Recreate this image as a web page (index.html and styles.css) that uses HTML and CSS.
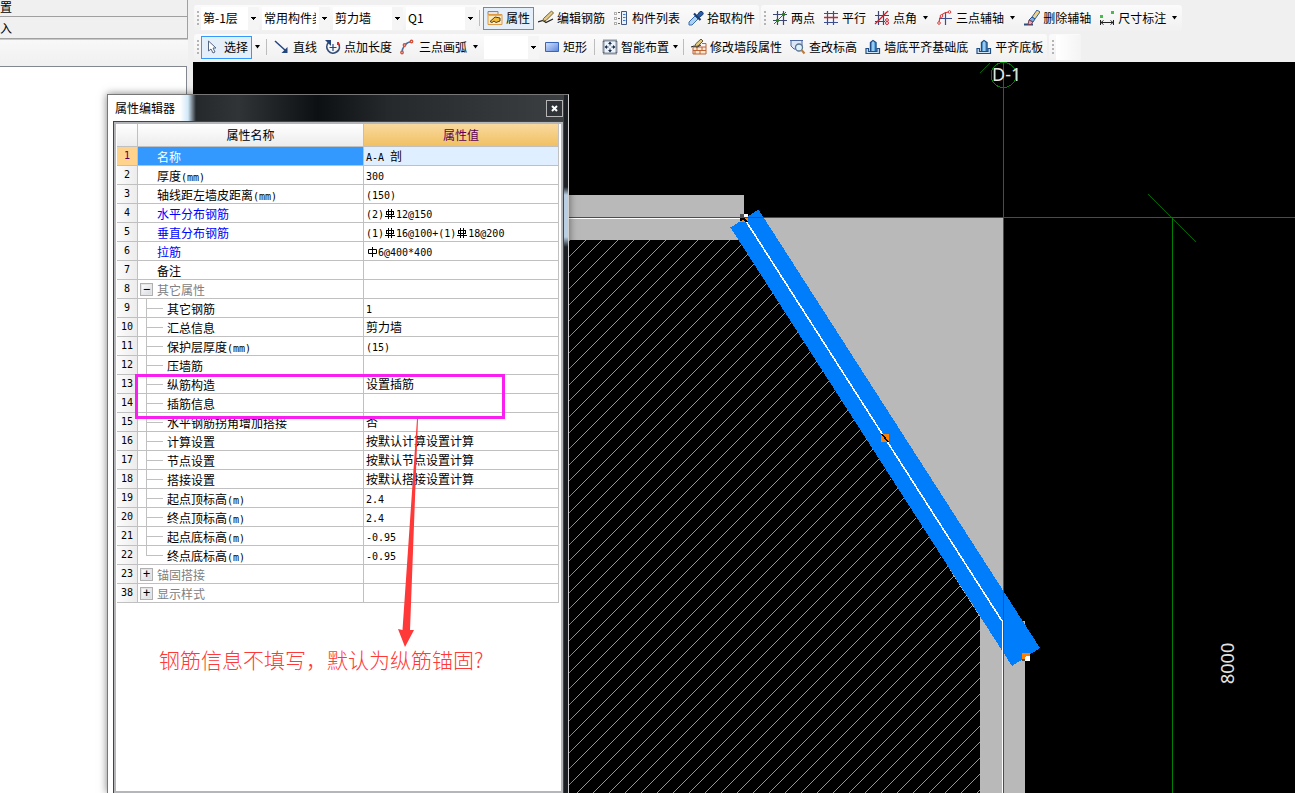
FILE: index.html
```html
<!DOCTYPE html>
<html lang="zh-CN">
<head>
<meta charset="utf-8">
<title>属性编辑器</title>
<link rel="stylesheet" href="styles.css">
</head>
<body>
<svg class="defs" aria-hidden="true">
  <defs>
    <linearGradient id="blueBox" x1="0" y1="0" x2="1" y2="1"><stop offset="0" stop-color="#d5e4ff"/><stop offset="1" stop-color="#5c86dc"/></linearGradient>
    <symbol id="caret" viewBox="0 0 7 4"><path d="M1 0h5L3.500 3.500z" fill="#000"/></symbol>
    <symbol id="base" viewBox="0 0 16 16"><path d="M5.500 12V3.500L8 1.500l3 2V12" fill="#5fa8e0" stroke="#1f4f86" stroke-width="1.400"/><path d="M8 2.500V13" stroke="#d3ecff"/><path d="M1 14.500V9.500h2.500v3h8.500v-3h2.500v5z" fill="#cfe5f7" stroke="#1f4f86" stroke-width="1.200"/></symbol>
    <symbol id="rebar" viewBox="0 0 12 12"><path d="M2 3.500h8M2 6.500h8M2.500 3.500v3M9.500 3.500v3M1 8.500h10M4.500 1v10M7.500 1v10" fill="none" stroke="#000"/></symbol>
    <symbol id="bar" viewBox="0 0 12 12"><path d="M2.500 3.500h8v4h-8zM6.500 1v10" fill="none" stroke="#000"/></symbol>
  </defs>
</svg>

<aside class="sidebar">
  <div class="side-row side-row-top">置</div>
  <div class="side-row">入</div>
  <div class="side-tools"></div>
  <div class="side-list"></div>
</aside>

<main class="main">
  <header class="toolbars">
    <div class="toolbar">
      <div class="strip">
        <i class="grip"></i>
        <div class="combos">
          <select class="combo combo-floor" aria-label="楼层"><option>第-1层</option></select>
          <select class="combo combo-kind" aria-label="构件类型"><option>常用构件类型</option></select>
          <select class="combo combo-item" aria-label="构件"><option>剪力墙</option></select>
          <select class="combo combo-item" aria-label="名称"><option>Q1</option></select>
        </div>
        <i class="sep"></i>
        <button class="tool active"><svg class="icon" viewBox="0 0 16 16"><path d="M1 1.500h10v3H1z" fill="#e5e5e5" stroke="#888"/><path d="M1 4.500h14v10H1z" fill="#ffe9bd" stroke="#dd9a42"/><path d="M1.500 5.500h13" stroke="#f0a850"/><path d="M3 11.500l5-4.500 5 1v3l-4 1.500-2-1.500-2 1.500z" fill="#f4bc3b" stroke="#4a4026"/></svg>属性</button>
        <button class="tool"><svg class="icon" viewBox="0 0 16 16"><path d="M0 12l5-1.500 3 2 7-3.500" fill="none" stroke="#222" stroke-width="1.300"/><path d="M13.500 1l2 2L8 10.500l-3 .5.500-2.500z" fill="#e2cb8c" stroke="#77602c"/></svg>编辑钢筋</button>
        <button class="tool"><svg class="icon" viewBox="0 0 16 16"><path d="M1.500 2.500h2v2h-2zM1.500 7.500h2v2h-2zM1.500 12.500h2v2h-2z" fill="#fff" stroke="#666" stroke-dasharray="1 1"/><path d="M5 2.500h2M5 8.500h2M5 13.500h2" stroke="#666"/><path d="M8.500 1.500h5v13h-5z" fill="#e8f0fb" stroke="#41597e"/><path d="M10 4.500h2.500M10 7.500h2.500M10 10.500h2.500" stroke="#3d79cf"/></svg>构件列表</button>
        <button class="tool"><svg class="icon" viewBox="0 0 16 16"><path d="M7 6l3 3-6 6H1v-3z" fill="#a9d2f2" stroke="#376cae"/><path d="M6 3.500L12.500 10" stroke="#173a70" stroke-width="2.200"/><path d="M9 5.500L11.500 2a2 2 0 0 1 3 3L11 7.500z" fill="#285fa8" stroke="#173a70"/></svg>拾取构件</button>
      </div>
      <div class="strip">
        <i class="grip"></i>
        <button class="tool"><svg class="icon" viewBox="0 0 16 16"><path d="M5.500 1v14M11.500 1v14M1 4.500h14M1 10.500h14" stroke="#3d4775" stroke-width="1.200"/><path d="M2 14L14 2" stroke="#c8202c"/><circle cx="5.500" cy="10.500" r="1.700" fill="#287d20"/><circle cx="11.500" cy="4.500" r="1.700" fill="#287d20"/></svg>两点</button>
        <button class="tool"><svg class="icon" viewBox="0 0 16 16"><path d="M4.500 1v14M10.500 1v14M1 3.500h14M1 12.500h14" stroke="#3d4d91" stroke-width="1.200"/><path d="M1 7.500h14" stroke="#bd2935" stroke-width="1.500"/></svg>平行</button>
        <button class="tool"><svg class="icon" viewBox="0 0 16 16"><path d="M4.500 1v14M9.500 1v14M1 5.500h14M1 11.500h10" stroke="#3d4775" stroke-width="1.200"/><path d="M1 14L14 1" stroke="#c8202c" stroke-width="1.300"/><circle cx="13" cy="10" r="1.400" fill="none" stroke="#cf2939"/><circle cx="13" cy="13" r="1.500" fill="none" stroke="#cf2939"/></svg>点角<svg class="caret"><use href="#caret"/></svg></button>
        <button class="tool"><svg class="icon" viewBox="0 0 16 16"><path d="M8.500 2v13M2 8.500h13" stroke="#3d4d91" stroke-width="1.200"/><path d="M2 14C2 6 6 2 13 2" fill="none" stroke="#d63d3d" stroke-width="1.200"/><g fill="#fff" stroke="#d63d3d"><circle cx="2" cy="13" r="1.300"/><circle cx="4.500" cy="6" r="1.300"/><circle cx="12.500" cy="2" r="1.300"/></g></svg>三点辅轴<svg class="caret"><use href="#caret"/></svg></button>
        <button class="tool"><svg class="icon" viewBox="0 0 16 16"><path d="M0 14.500h9" stroke="#2b4e79" stroke-width="2"/><path d="M13 0l3 2-5 7-3-2z" fill="#efd38b" stroke="#34639c"/><path d="M8 7l3 2-2 3-4-2z" fill="#7faee1" stroke="#285489"/><path d="M5 10l4 2-2 2.500H4z" fill="#eda3b9" stroke="#714255"/></svg>删除辅轴</button>
        <button class="tool"><svg class="icon" viewBox="0 0 16 16"><path d="M1.500 10v5M14.500 10v5M2 12.500h12M4.500 10.500L2 12.500l2.500 2M11.500 10.500l2.500 2-2.500 2" fill="none" stroke="#222"/><path d="M1 5h3v3H1zM12 1h3v3h-3z" fill="#49ba4c"/></svg>尺寸标注<svg class="caret"><use href="#caret"/></svg></button>
      </div>
    </div>
    <div class="toolbar">
      <div class="strip">
        <i class="grip"></i>
        <button class="tool active"><svg class="icon" viewBox="0 0 16 16"><path d="M3.500 2v10l2.500-2 2 4 2-1-2-4h3z" fill="#fff" stroke="#556582"/></svg>选择</button>
        <button class="drop" aria-label="选择选项"><svg class="caret"><use href="#caret"/></svg></button>
        <i class="sep"></i>
        <button class="tool"><svg class="icon" viewBox="0 0 16 16"><path d="M1 2l11 10" stroke="#24467c" stroke-width="1.500"/><path d="M13.500 8v6h-6z" fill="#24467c"/></svg>直线</button>
        <button class="tool"><svg class="icon" viewBox="0 0 16 16"><path d="M3.500 3.500a6.300 6.300 0 1 0 10 1" fill="none" stroke="#344e78" stroke-width="1.800"/><path d="M0 1h6v6z" fill="#24467c"/><path d="M8 5v7M4.500 8.500h7" stroke="#24467c" stroke-width="1.200"/><path d="M13 3v3" stroke="#cc2f30" stroke-width="2"/></svg>点加长度</button>
        <button class="tool"><svg class="icon" viewBox="0 0 16 16"><path d="M2 14C2 8 6 3 12 2.500" fill="none" stroke="#426fa6" stroke-width="1.500"/><g fill="#fff" stroke="#d5513c" stroke-width="1.400"><circle cx="2" cy="13.500" r="1.200"/><circle cx="4.500" cy="6" r="1.200"/><circle cx="11.500" cy="2.500" r="1.200"/></g></svg>三点画弧<svg class="caret"><use href="#caret"/></svg></button>
        <select class="combo combo-blank" aria-label="画弧方式"><option></option></select>
        <button class="tool"><svg class="icon" viewBox="0 0 16 16"><path d="M1.500 3.500h13v9h-13z" fill="url(#blueBox)" stroke="#3864ba"/></svg>矩形</button>
        <i class="sep"></i>
        <button class="tool tool-tight"><svg class="icon" viewBox="0 0 16 16"><path d="M1.500 1.500h13v13h-13z" fill="#edf3fa" stroke="#28384d" stroke-width="2" stroke-dasharray="1 1"/><path d="M8 3.500v3M8 9.500v3M3.500 8h3M9.500 8h3" stroke="#1b2f4c"/><path d="M8 2.500l2 2.500H6zM8 13.500L6 11h4zM2.500 8L5 6v4zM13.500 8L11 10V6z" fill="#1b2f4c"/></svg>智能布置<svg class="caret"><use href="#caret"/></svg></button>
        <i class="sep"></i>
        <button class="tool"><svg class="icon" viewBox="0 0 16 16"><path d="M2 8h13v7H2z" fill="#ffe5cf" stroke="#bc6535"/><path d="M2 11.500h13M6 8v3.500M11 8v3.500M4 11.500V15M9 11.500V15M11 4.500h4V8" fill="none" stroke="#bc6535"/><path d="M0 8l3-1 3 1 4-2" fill="none" stroke="#222"/><path d="M10 0l2 2-5 5-3 .5.500-2.500z" fill="#dfc982" stroke="#68572d"/></svg>修改墙段属性</button>
        <button class="tool"><svg class="icon" viewBox="0 0 16 16"><path d="M0 1.500h13M1 2v5l3 3h6l2-3V2" fill="#dae5f7" stroke="#4c66a0"/><circle cx="9" cy="8.500" r="3.500" fill="#dff1fa" stroke="#58758e" stroke-width="1.300"/><path d="M11.500 11l3 3.500" stroke="#bd7a38" stroke-width="2"/></svg>查改标高</button>
        <button class="tool"><svg class="icon"><use href="#base"/></svg>墙底平齐基础底</button>
        <button class="tool"><svg class="icon"><use href="#base"/></svg>平齐底板</button>
      </div>
      <div class="strip strip-empty"><i class="grip"></i><span class="blank"></span></div>
    </div>
  </header>

  <section class="canvas">
    <svg class="drawing" role="img" aria-label="墙体平面图">
      <defs>
        <pattern id="hatch" width="16" height="16" patternUnits="userSpaceOnUse">
          <path d="M-2 12L12 -2M8 18L18 8" stroke="#d8d8d8" stroke-width="0.700"/>
        </pattern>
      </defs>
      <g transform="translate(-193 -62)" shape-rendering="crispEdges">
        <path d="M560 195H744V240H560zM744 218H1003V621H980zM980 621h45V2000h-45z" fill="#b9b9b9"/>
        <path d="M569 240H739L980 617V2000H569z" fill="#000"/>
        <path d="M569 240H739L980 617V2000H569z" fill="url(#hatch)"/>
        <path d="M730.500 227.500L758.500 209.500 1040 648 1012 666z" fill="#007dfa"/>
        <path d="M744 218L1002 621" stroke="#fff" stroke-width="1.600"/>
        <path d="M560 218h184v1H560zM1002 621h1V2000h-1z" fill="#fff"/>
        <path d="M560 217h443v1H560zM1003 217h1V2000h-1z" fill="#f00"/>
        <path d="M1003 62h1v155h-1zM1004 217h2000v1H1004zM1172 218h1V2000h-1z" fill="#008000"/>
        <path d="M1148 194l48 48M979 72.500l10-10" stroke="#008000" stroke-width="0.800"/>
        <circle cx="1003.500" cy="75" r="12.500" fill="none" stroke="#008000"/>
        <path d="M740 214h4v4h-4z" fill="#505050"/><path d="M744 214h4v3h-4z" fill="#fff"/>
        <path d="M740 218h8v4h-8z" fill="#ff7f00"/><path d="M740 218h5l3 4h-2l-3-2-3 1z" fill="#000"/>
        <path d="M881 434h8v8h-8z" fill="#ff7f00"/><path d="M882 434l6 8" stroke="#000" stroke-width="1.500"/>
        <path d="M1022 653h8v8h-8z" fill="#ff7f00"/><path d="M1025 657l2-1h3v5h-5z" fill="#fff"/><path d="M1022 659h3v2h-3z" fill="#505050"/>
      </g>
      <g class="cad-text" transform="translate(-193 -62)">
        <text x="992" y="81">D-1</text>
        <text transform="translate(1234 684) rotate(-90)">8000</text>
      </g>
    </svg>
  </section>
</main>

<section class="dialog" aria-label="属性编辑器">
  <header class="dialog-title"><h1>属性编辑器</h1><button class="close" aria-label="关闭"><svg class="close-icon" viewBox="0 0 9 9"><path d="M2 2l5 5M7 2L2 7" stroke="#fff" stroke-width="2"/></svg></button></header>
  <div class="dialog-body">
    <table class="props">
      <colgroup><col class="col-num"><col class="col-name"><col></colgroup>
      <thead><tr><th></th><th>属性名称</th><th class="th-value">属性值</th></tr></thead>
      <tbody>
        <tr class="selected"><th>1</th><td>名称</td><td><span class="en">A-A </span>剖</td></tr>
        <tr><th>2</th><td>厚度<span class="en">(mm)</span></td><td><span class="en">300</span></td></tr>
        <tr><th>3</th><td>轴线距左墙皮距离<span class="en">(mm)</span></td><td><span class="en">(150)</span></td></tr>
        <tr class="key"><th>4</th><td>水平分布钢筋</td><td><span class="en">(2)<svg class="rebar"><use href="#rebar"/></svg>12@150</span></td></tr>
        <tr class="key"><th>5</th><td>垂直分布钢筋</td><td><span class="en">(1)<svg class="rebar"><use href="#rebar"/></svg>16@100+(1)<svg class="rebar"><use href="#rebar"/></svg>18@200</span></td></tr>
        <tr class="key"><th>6</th><td>拉筋</td><td><span class="en"><svg class="rebar"><use href="#bar"/></svg>6@400*400</span></td></tr>
        <tr><th>7</th><td>备注</td><td></td></tr>
        <tr class="group"><th>8</th><td><button class="toggle" aria-label="折叠">−</button>其它属性</td><td></td></tr>
        <tr class="child"><th>9</th><td>其它钢筋</td><td><span class="en">1</span></td></tr>
        <tr class="child"><th>10</th><td>汇总信息</td><td>剪力墙</td></tr>
        <tr class="child"><th>11</th><td>保护层厚度<span class="en">(mm)</span></td><td><span class="en">(15)</span></td></tr>
        <tr class="child"><th>12</th><td>压墙筋</td><td></td></tr>
        <tr class="child"><th>13</th><td>纵筋构造</td><td>设置插筋</td></tr>
        <tr class="child"><th>14</th><td>插筋信息</td><td></td></tr>
        <tr class="child"><th>15</th><td>水平钢筋拐角增加搭接</td><td>否</td></tr>
        <tr class="child"><th>16</th><td>计算设置</td><td>按默认计算设置计算</td></tr>
        <tr class="child"><th>17</th><td>节点设置</td><td>按默认节点设置计算</td></tr>
        <tr class="child"><th>18</th><td>搭接设置</td><td>按默认搭接设置计算</td></tr>
        <tr class="child"><th>19</th><td>起点顶标高<span class="en">(m)</span></td><td><span class="en">2.4</span></td></tr>
        <tr class="child"><th>20</th><td>终点顶标高<span class="en">(m)</span></td><td><span class="en">2.4</span></td></tr>
        <tr class="child"><th>21</th><td>起点底标高<span class="en">(m)</span></td><td><span class="en">-0.95</span></td></tr>
        <tr class="child last"><th>22</th><td>终点底标高<span class="en">(m)</span></td><td><span class="en">-0.95</span></td></tr>
        <tr class="group"><th>23</th><td><button class="toggle" aria-label="展开">+</button>锚固搭接</td><td></td></tr>
        <tr class="group"><th>38</th><td><button class="toggle" aria-label="展开">+</button>显示样式</td><td></td></tr>
      </tbody>
    </table>
    <div class="mark-box"></div>
    <svg class="mark-arrow" viewBox="0 0 24 228" aria-hidden="true"><path d="M20 0h1L13 211l4 0-9 17-7-18 4.500 1z" fill="#ff3838"/></svg>
    <p class="mark-note">钢筋信息不填写，默认为纵筋锚固?</p>
  </div>
</section>
</body>
</html>
```
FILE: styles.css
```css
* { box-sizing: border-box; }

body {
  margin: 0;
  height: 100vh;
  display: flex;
  position: relative;
  overflow: hidden;
  background: #f0f0f0;
  color: #000;
  font: 12px/16px "Noto Sans CJK SC", sans-serif;
}

.defs { position: absolute; width: 0; height: 0; }

button, select { font: inherit; color: inherit; }

/* left panel */
.sidebar {
  flex: none;
  width: 188px;
  display: flex;
  flex-direction: column;
}
.side-row {
  height: 22px;
  padding-top: 3px;
  border-right: 1px solid #a0a0a0;
  border-bottom: 1px solid #a0a0a0;
}
.side-row-top { height: 17px; padding: 0; line-height: 13px; }
.side-tools {
  height: 27px;
  border-top: 1px solid #c8c8c8;
  background: linear-gradient(#f8f8f8, #f0f0f0);
}
.side-list {
  flex: 1;
  margin-right: 1px;
  background: #fff;
  border-top: 1px solid #828790;
  border-right: 1px solid #828790;
}

/* toolbars */
.main { flex: 1; min-width: 0; display: flex; flex-direction: column; }
.toolbars {
  display: flex;
  flex-direction: column;
  gap: 3px;
  padding: 5px 0 2px 6px;
}
.toolbar { display: flex; gap: 2px; height: 26px; }
.strip {
  display: flex;
  align-items: center;
  flex: none;
  padding-left: 3px;
  border-radius: 3px;
  background: linear-gradient(#fbfbfb, #f1f1f1);
}
.grip {
  flex: none;
  width: 2px;
  height: 15px;
  margin-right: 2px;
  background: repeating-linear-gradient(#b4b4b4 0 2px, transparent 2px 4px);
}
.combos { display: flex; gap: 3px; }
.combo {
  appearance: none;
  height: 23px;
  margin: 0;
  padding: 0 14px 0 2px;
  border: 0;
  border-radius: 0;
  background:
    linear-gradient(#000, #000) right 3px top 10px / 5px 1px no-repeat,
    linear-gradient(#000, #000) right 4px top 11px / 3px 1px no-repeat,
    linear-gradient(#000, #000) right 5px top 12px / 1px 1px no-repeat,
    linear-gradient(#f5f5f5, #f5f5f5) right / 11px 100% no-repeat,
    #fff;
}
.combo-floor { width: 58px; }
.combo-kind { width: 68px; }
.combo-item { width: 70px; }
.combo-blank { width: 55px; margin: 0 1px; }
.sep { flex: none; width: 1px; height: 16px; margin: 0 3px; background: #bdbdbd; }
.tool {
  display: flex;
  align-items: center;
  flex: none;
  gap: 3px;
  height: 23px;
  margin: 0;
  padding: 0 3px;
  border: 1px solid transparent;
  background: none;
  white-space: nowrap;
}
.tool.active { border-color: #3399ff; background: #e4effa; }
.tool .caret { margin-left: 2px; }
.tool-tight { padding-right: 0; }
.tool-tight .caret { margin-left: 0; }
.icon { width: 16px; height: 16px; flex: none; }
.caret { width: 7px; height: 4px; flex: none; }
.drop { display: flex; align-items: center; width: 11px; height: 23px; padding: 0 2px; border: 0; background: none; }
.strip-empty { width: 32px; }
.blank { flex: 1; height: 25px; background: linear-gradient(90deg, #fff, #f4f4f4); }

/* drawing area */
.canvas { flex: 1; min-height: 0; margin-left: 5px; background: #000; }
.drawing { display: block; width: 100%; height: 100%; }
.cad-text { font: 18px "Noto Sans", sans-serif; fill: #e4e4e4; }

/* floating property window */
.dialog {
  position: absolute;
  left: 107px;
  top: 94px;
  bottom: 0;
  width: 462px;
  display: flex;
  flex-direction: column;
  padding: 0 4px 0 5px;
  border: 1px solid #777;
  border-right-color: #d0d0d0;
  border-bottom: 0;
  background:
    linear-gradient(#1c2024 0 92px, #b9cfe3 100px 142px, #1c2024 152px) right / 4px 100% no-repeat,
    linear-gradient(90deg, #fff 0 72px, #d2e8f8 80px, #26292c 88px, #303436 130px, #0c1012 210px, #25292b 280px, #3d4042) 0 0 / 100% 26px no-repeat,
    #fff;
  box-shadow: 0 0 8px rgba(0, 0, 0, 0.5);
}
.dialog-title {
  display: flex;
  align-items: center;
  justify-content: space-between;
  height: 26px;
}
.dialog-title h1 { margin: 0; padding-left: 2px; font-size: 12px; line-height: 16px; font-weight: 400; }
.close {
  display: flex;
  align-items: center;
  justify-content: center;
  width: 17px;
  height: 17px;
  margin-right: 1px;
  padding: 0;
  border: 1px solid #b5b5b5;
  background: #303438;
}
.close-icon { width: 9px; height: 9px; }
.dialog-body {
  position: relative;
  flex: 1;
  border: 1px solid #404448;
  border-bottom: 0;
  background: #fff;
  box-shadow: inset 0 0 0 2px #b4b6b9;
  padding: 2px;
}

.props {
  width: 442px;
  margin-left: 1px;
  table-layout: fixed;
  border-collapse: separate;
  border-spacing: 0;
}
.col-num { width: 21px; }
.col-name { width: 226px; }
.props th, .props td {
  height: 19px;
  padding: 0;
  border-right: 1px solid #c0c0c0;
  border-bottom: 1px solid #c0c0c0;
  font-weight: 400;
  white-space: nowrap;
}
.props thead th { height: 23px; background: linear-gradient(#fff, #ececec); }
.props thead .th-value { background: linear-gradient(#f9d99f, #f1c162); color: #5a0055; }
.props tbody th {
  background: linear-gradient(90deg, #fcfcfc, #ececec);
  font: 10px/16px "DejaVu Sans Mono", monospace;
}
.props td { padding-left: 2px; }
.props td:nth-child(2) { padding-top: 2px; padding-left: 19px; }
.props .child td:nth-child(2) {
  padding-left: 29px;
  background:
    linear-gradient(#c0c0c0, #c0c0c0) 8px 0 / 1px 100% no-repeat,
    linear-gradient(#c0c0c0, #c0c0c0) 8px 9px / 17px 1px no-repeat;
}
.props .last td:nth-child(2) {
  background:
    linear-gradient(#c0c0c0, #c0c0c0) 8px 0 / 1px 9px no-repeat,
    linear-gradient(#c0c0c0, #c0c0c0) 8px 9px / 17px 1px no-repeat;
}
.props .selected th { background: #ffd38c; color: #5a0055; }
.props .selected td { background: #e0efff; }
.props .selected td:nth-child(2) { background: #3399ff; color: #fff; }
.props .key td:nth-child(2) { color: #0000ff; }
.props .group td { color: #808080; }
.props .group td:nth-child(2) { padding-left: 2px; }
.en { font: 10px/10px "DejaVu Sans Mono", monospace; white-space: pre; }
.rebar { width: 12px; height: 12px; vertical-align: -2px; }
.toggle {
  width: 13px;
  height: 13px;
  margin: 1px 4px 0 0;
  padding: 0;
  border: 1px solid #b0b0b0;
  background: linear-gradient(135deg, #fff, #d5d9df);
  box-shadow: inset 0 0 0 1px #e6e6e6;
  color: #000;
  font: 12px/11px "DejaVu Sans Mono", monospace;
  vertical-align: top;
}

/* annotations drawn over the window */
.mark-box {
  position: absolute;
  left: 21px;
  top: 252px;
  width: 370px;
  height: 45px;
  border: 3px solid #f81ff0;
}
.mark-arrow { position: absolute; left: 283px; top: 297px; width: 24px; height: 228px; }
.mark-note {
  position: absolute;
  left: 45px;
  top: 523px;
  margin: 0;
  color: #ff3838;
  font-size: 21px;
  line-height: 28px;
  font-weight: 300;
  white-space: nowrap;
}
```
